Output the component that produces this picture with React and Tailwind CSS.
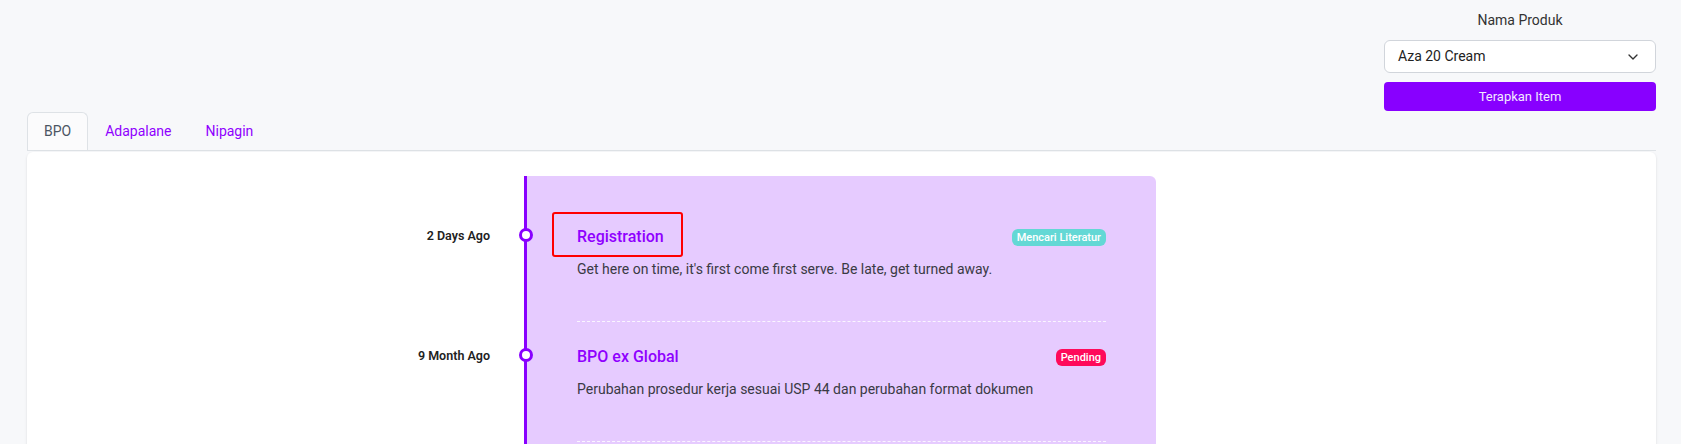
import { ChevronDown } from 'lucide-react';

const items = [
  {
    date: '2 Days Ago',
    title: 'Registration',
    desc: "Get here on time, it's first come first serve. Be late, get turned away.",
    badge: 'Mencari Literatur',
    badgeClass: 'bg-[#63d8d5]',
    marked: true,
  },
  {
    date: '9 Month Ago',
    title: 'BPO ex Global',
    desc: 'Perubahan prosedur kerja sesuai USP 44 dan perubahan format dokumen',
    badge: 'Pending',
    badgeClass: 'bg-[#ff0a5a]',
    marked: false,
  },
];

function TimelineItem({ item }) {
  return (
    <div className="flex">
      <div className="w-[463px] shrink-0 pt-[24px] text-right text-[12.5px] font-semibold leading-5 text-[#222]">{item.date}</div>
      <div className="w-[34px] shrink-0"></div>
      <div className="relative w-[3px] shrink-0 bg-[#8800ff]">
        <span className="absolute left-1/2 top-[26px] h-[14px] w-[14px] -translate-x-1/2 rounded-full border-[3px] border-[#8800ff] bg-white"></span>
      </div>
      <div className="w-[629px] shrink-0 bg-[#e6cbff] px-[50px]">
        <div className="border-b border-dashed border-white/80 pb-[42px] pt-[25px]">
          <div className="flex items-center justify-between">
            <div className="relative">
              <h3 className="text-[16px] font-medium leading-5 text-[#8f00ff]">{item.title}</h3>
              {item.marked && (
                <span className="absolute -left-[25px] -top-[15px] h-[45px] w-[131px] rounded-[3px] border-2 border-[#ff0000]"></span>
              )}
            </div>
            <span className={`rounded-md px-[5px] text-[11px] font-medium leading-[17px] text-white ${item.badgeClass}`}>{item.badge}</span>
          </div>
          <p className="mt-3 text-[14px] leading-5 text-[#3a3a44]">{item.desc}</p>
        </div>
      </div>
    </div>
  );
}

export default function App() {
  return (
    <div className="min-h-screen bg-[#f7f8fa] pl-[27px] pr-[25px] font-['Roboto','Liberation_Sans',sans-serif]">
      <div className="flex justify-end pt-[10px]">
        <div className="w-[272px]">
          <div className="text-center text-[14px] leading-5 text-[#333]">Nama Produk</div>
          <div className="mt-[10px] flex h-[33px] items-center justify-between rounded-md border border-[#d1d5db] bg-white pl-[13px] pr-[14px] text-[14px] text-[#222]">
            <span>Aza 20 Cream</span>
            <ChevronDown size={16} strokeWidth={2} className="text-[#333]" />
          </div>
          <button className="mt-[9px] h-[29px] w-full rounded bg-[#8800ff] text-[13px] text-[#f3e8ff]">Terapkan Item</button>
        </div>
      </div>

      <div className="mt-px flex border-b border-[#dee2e6] text-[14px]">
        <button className="-mb-px h-[38px] rounded-t-md border border-b-0 border-[#dee2e6] bg-[#fbfbfc] px-4 text-[#4b5563]">BPO</button>
        <button className="h-[38px] px-[17px] text-[#9000ff]">Adapalane</button>
        <button className="h-[38px] px-[17px] text-[#9000ff]">Nipagin</button>
      </div>

      <div className="mt-[1px] rounded-md bg-white pb-10 pt-6 shadow-sm">
        <div className="flex">
          <div className="w-[497px] shrink-0"></div>
          <div className="w-[3px] shrink-0 bg-[#8800ff]"></div>
          <div className="h-[26px] w-[629px] shrink-0 rounded-tr-md bg-[#e6cbff]"></div>
        </div>
        {items.map((item) => (
          <TimelineItem key={item.title} item={item} />
        ))}
        <div className="flex">
          <div className="w-[497px] shrink-0"></div>
          <div className="w-[3px] shrink-0 bg-[#8800ff]"></div>
          <div className="h-[40px] w-[629px] shrink-0 rounded-br-md bg-[#e6cbff]"></div>
        </div>
      </div>
    </div>
  );
}
